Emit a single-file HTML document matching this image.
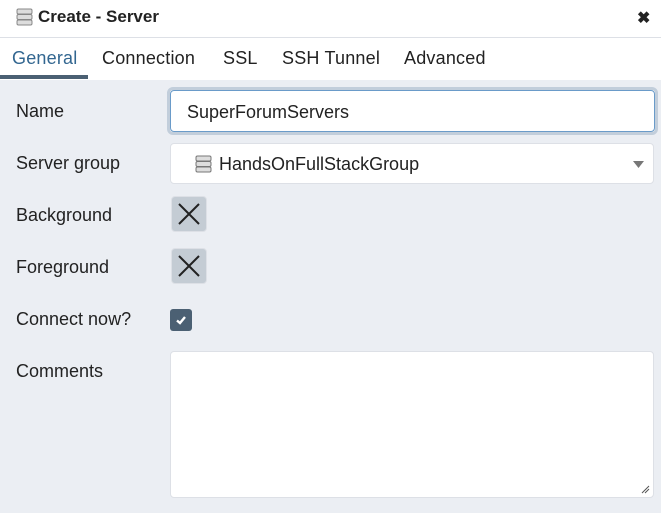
<!DOCTYPE html>
<html><head><style>
body{margin:0;width:661px;height:513px;overflow:hidden;background:#ebeef3;font-family:"Liberation Sans",sans-serif;color:#222;position:relative}
.abs{position:absolute}
.title{left:0;top:0;width:661px;height:37px;background:#fff;border-bottom:1px solid #dde0e6}
.tabs{left:0;top:38px;width:661px;height:42px;background:#fff}
.tab{position:absolute;top:10px;font-size:18px;color:#222;letter-spacing:0.2px}
.lbl{position:absolute;left:16px;font-size:18px;color:#222}
.box{position:absolute;background:#fff;border:1px solid #dde0e6;border-radius:4px;box-sizing:border-box}
.sw{position:absolute;left:171px;width:36px;height:36px;background:#c4ccd4;border:1px solid #dde0e6;border-radius:4px;box-sizing:border-box}
</style></head><body>
<div class="abs title">
<svg class="abs" style="left:16px;top:8px" width="17" height="18" viewBox="0 0 17 18"><g fill="#ddd" stroke="#888" stroke-width="1"><rect x="1" y="1" width="15" height="5" rx="1.5"/><rect x="1" y="6.5" width="15" height="5" rx="1.5"/><rect x="1" y="12" width="15" height="5" rx="1.5"/></g></svg>
<div class="abs" style="left:38px;top:7px;font-size:17px;font-weight:bold;color:#222">Create - Server</div>
<div class="abs" style="left:637px;top:8px;font-size:16px;font-weight:bold;color:#222">✖</div>
</div>
<div class="abs tabs">
<div class="tab" style="left:12px;color:#326690">General</div>
<div class="tab" style="left:102px">Connection</div>
<div class="tab" style="left:223px">SSL</div>
<div class="tab" style="left:282px">SSH Tunnel</div>
<div class="tab" style="left:404px">Advanced</div>
<div class="abs" style="left:0;top:37px;width:88px;height:4px;background:#4b6073"></div>
</div>
<div class="lbl" style="top:101px">Name</div>
<div class="lbl" style="top:153px">Server group</div>
<div class="lbl" style="top:205px">Background</div>
<div class="lbl" style="top:257px">Foreground</div>
<div class="lbl" style="top:309px">Connect now?</div>
<div class="lbl" style="top:361px">Comments</div>
<div class="box" style="left:167px;top:87px;width:491px;height:48px;border:3px solid #c2cedb;border-radius:6px;"><div style="position:absolute;inset:0;border:1px solid #6a9bc9;border-radius:4px;background:#fff"></div><div style="position:absolute;left:17px;top:12px;font-size:18px">SuperForumServers</div></div>
<div class="box" style="left:170px;top:143px;width:484px;height:41px">
<svg class="abs" style="left:24px;top:11px" width="17" height="18" viewBox="0 0 17 18"><g fill="#ddd" stroke="#777" stroke-width="1"><rect x="1" y="1" width="15" height="5" rx="1.5"/><rect x="1" y="6.5" width="15" height="5" rx="1.5"/><rect x="1" y="12" width="15" height="5" rx="1.5"/></g></svg>
<div class="abs" style="left:48px;top:10px;font-size:18px">HandsOnFullStackGroup</div>
<svg class="abs" style="left:462px;top:17px" width="11" height="7"><path d="M0 0H11L5.5 7Z" fill="#777"/></svg>
</div>
<div class="sw" style="top:196px"><svg width="34" height="34"><path d="M7 7L27 27M27 7L7 27" stroke="#222" stroke-width="2"/></svg></div>
<div class="sw" style="top:248px"><svg width="34" height="34"><path d="M7 7L27 27M27 7L7 27" stroke="#222" stroke-width="2"/></svg></div>
<div class="abs" style="left:170px;top:309px;width:22px;height:22px;background:#4b6073;border-radius:3px"><svg width="22" height="22"><path d="M7 11.5L10 14L15 8" stroke="#fff" stroke-width="2.4" fill="none"/></svg></div>
<div class="box" style="left:170px;top:351px;width:484px;height:147px">
<svg class="abs" style="right:3px;bottom:3px" width="9" height="9"><path d="M1 8L8 1M4 8L8 4" stroke="#555" stroke-width="1"/></svg>
</div>
</body></html>
